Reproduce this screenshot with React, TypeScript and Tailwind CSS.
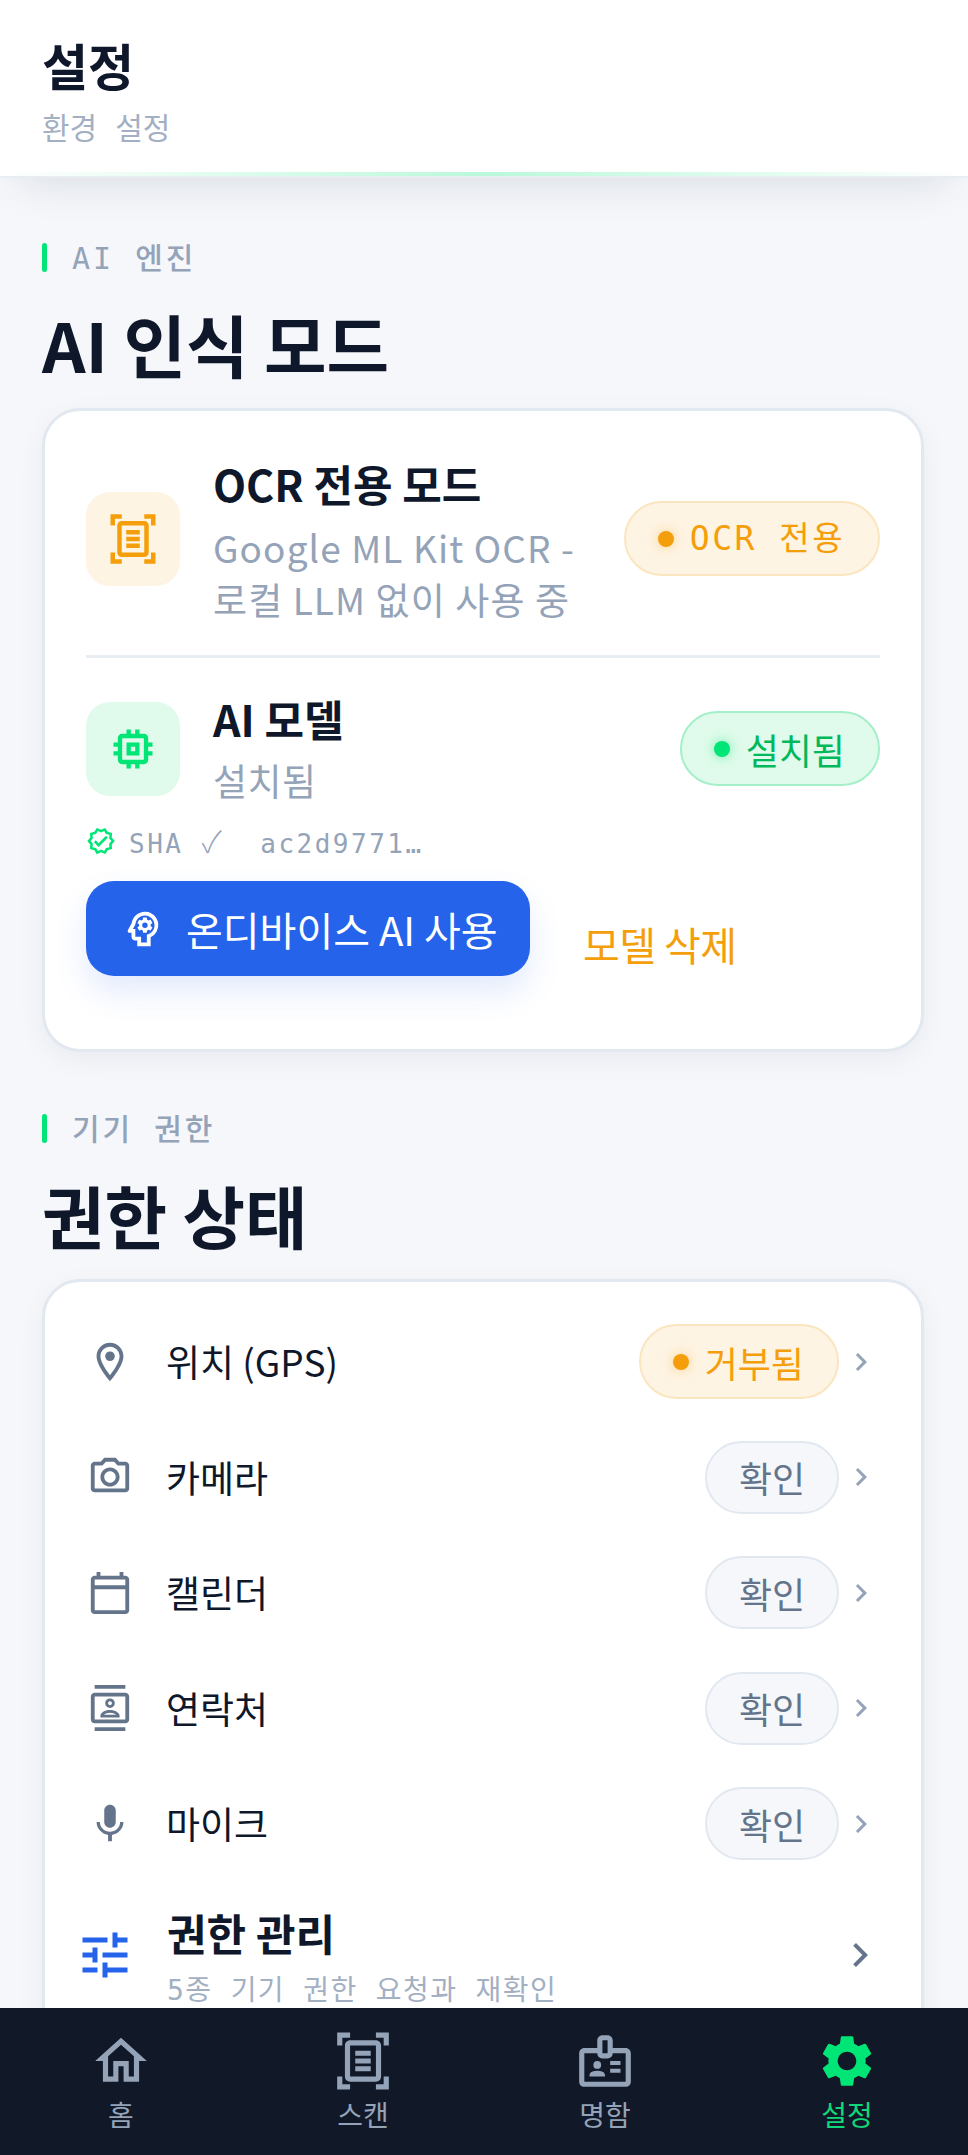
import type { ReactNode } from "react";
import {
  MdChevronRight,
  MdMic,
  MdOutlineBadge,
  MdOutlineCalendarToday,
  MdOutlineContacts,
  MdOutlineDocumentScanner,
  MdOutlineHome,
  MdOutlineLocationOn,
  MdOutlineMemory,
  MdOutlinePhotoCamera,
  MdOutlinePsychology,
  MdOutlineVerified,
  MdSettings,
  MdTune,
} from "react-icons/md";

const sans = "font-['Noto_Sans_CJK_KR','Noto_Sans',sans-serif]";
const mono = "font-['DejaVu_Sans_Mono','Noto_Sans_CJK_KR',monospace]";

function SectionHead({ label, title }: { label: string; title: string }) {
  return (
    <div>
      <div className="flex h-[30px] items-center gap-[25px]">
        <span className="-mt-[5px] h-[29px] w-[5px] rounded-full bg-[#00e676]" />
        <span className={`${mono} -mt-[2px] text-[30px] leading-none font-medium tracking-[3px] text-[#94a3b8]`}>{label}</span>
      </div>
      <h2 className="mt-[27px] text-[68px] leading-[84px] font-bold text-[#0f172a]">{title}</h2>
    </div>
  );
}

function Badge({ tone, children }: { tone: "amber" | "green"; children: ReactNode }) {
  const amber = tone === "amber";
  return (
    <span
      className={`flex h-[75px] shrink-0 items-center gap-[16px] rounded-full border-2 pr-[33px] pl-[32px] text-[36px] ${
        amber
          ? "border-[#fbe5bf] bg-[#fef4e3] text-[#f59e0b]"
          : "border-[#a5efc9] bg-[#e0fbeb] text-[#00b85c]"
      }`}
    >
      <span
        className={`h-[16px] w-[16px] rounded-full ${
          amber ? "bg-[#f59e0b] shadow-[0_0_12px_#f59e0b66]" : "bg-[#00e676] shadow-[0_0_12px_#00e67688]"
        }`}
      />
      {children}
    </span>
  );
}

function PermissionRow({ icon, label, denied }: { icon: ReactNode; label: string; denied?: boolean }) {
  return (
    <div className="flex h-[115.5px] items-center pr-[42px] pl-[42px]">
      <span className="flex w-[46px] justify-center text-[46px] text-[#64748b]">{icon}</span>
      <span className="ml-[33px] flex-1 text-[37px] text-[#0f172a]">{label}</span>
      {denied ? (
        <Badge tone="amber">거부됨</Badge>
      ) : (
        <span className="flex h-[73px] w-[134px] items-center justify-center rounded-full border-2 border-[#e2e8f0] bg-[#f5f7fb] text-[36px] text-[#64748b]">
          확인
        </span>
      )}
      <MdChevronRight className="ml-[4px] text-[36px] text-[#94a3b8]" />
    </div>
  );
}

function NavItem({ icon, label, active }: { icon: ReactNode; label: string; active?: boolean }) {
  return (
    <div className={`flex flex-col items-center ${active ? "text-[#00e676]" : "text-[#94a3b8]"}`}>
      <span className="flex h-[66px] items-center text-[62px]">{icon}</span>
      <span className={`mt-[2px] text-[28px] leading-[36px] ${active ? "text-[#10d878]" : ""}`}>{label}</span>
    </div>
  );
}

export default function App() {
  return (
    <div className={`${sans} flex h-[2155px] w-[968px] flex-col overflow-hidden bg-[#f5f7fb]`}>
      <div className="min-h-0 flex-1 overflow-hidden">
        <header className="relative h-[178px] border-b-2 border-[#e8edf3] bg-white pt-[30px] pl-[42px] shadow-[0_24px_40px_-20px_#0f172a1f]">
          <h1 className="text-[50px] leading-[68px] font-bold text-[#0f172a]">설정</h1>
          <p className={`${mono} mt-[13px] text-[30px] leading-[36px] text-[#a3afc2]`}>환경 설정</p>
          <span className="absolute inset-x-0 bottom-0 h-[4px] bg-gradient-to-r from-transparent via-[#00e67644] to-transparent" />
        </header>

        <main className="pt-[67px] pr-[44px] pl-[42px]">
          <SectionHead label="AI 엔진" title="AI 인식 모드" />
          <section className="mt-[22px] h-[644px] rounded-[38px] border-[3px] border-[#e2e8f0] bg-white px-[41px] pt-[42px] shadow-[0_8px_28px_#0f172a0d]">
            <div className="flex h-[171px] items-center">
              <span className="flex h-[94px] w-[94px] shrink-0 items-center justify-center rounded-[24px] bg-[#fef4e3] text-[54px] text-[#f59e0b]">
                <MdOutlineDocumentScanner />
              </span>
              <div className="ml-[33px] min-w-0 flex-1">
                <p className="text-[43px] leading-[60px] font-bold text-[#0f172a]">OCR 전용 모드</p>
                <p className="mt-[8px] w-[380px] text-[37px] leading-[52px] tracking-[1.1px] text-[#94a3b8]">
                  Google ML Kit OCR - 로컬 LLM 없이 사용 중
                </p>
              </div>
              <Badge tone="amber">
                <span className={`${mono} text-[33px] tracking-[2.5px]`}>OCR 전용</span>
              </Badge>
            </div>
            <div className="mt-[31px] h-[3px] bg-[#e8edf3]" />

            <div className="mt-[32px] flex h-[117px] items-center">
              <span className="flex h-[94px] w-[94px] shrink-0 items-center justify-center rounded-[24px] bg-[#e0fbeb] text-[52px] text-[#00e676]">
                <MdOutlineMemory />
              </span>
              <div className="ml-[33px] min-w-0 flex-1">
                <p className="text-[43px] leading-[58px] font-bold text-[#0f172a]">AI 모델</p>
                <p className="mt-[5px] text-[37px] leading-[56px] tracking-[0.5px] text-[#94a3b8]">설치됨</p>
              </div>
              <Badge tone="green">설치됨</Badge>
            </div>

            <div className="mt-[19px] flex h-[30px] items-center">
              <MdOutlineVerified className="text-[30px] text-[#00e676]" />
              <span className={`${mono} ml-[13px] text-[26px] tracking-[2.5px] whitespace-pre text-[#94a3b8]`}>
                SHA <span className="font-['Noto_Sans_CJK_KR'] text-[30px] font-light">✓</span>  ac2d9771…
              </span>
            </div>

            <div className="mt-[25px] flex items-start">
              <button className="flex h-[95px] w-[444px] items-center rounded-[28px] bg-[#2563eb] pl-[34px] text-[40px] text-white shadow-[0_16px_32px_#2563eb22]">
                <MdOutlinePsychology className="text-[46px]" />
                <span className="ml-[20px]">온디바이스 AI 사용</span>
              </button>
              <span className="mt-[35px] ml-[53px] text-[40px] leading-[56px] tracking-[-0.5px] text-[#f59e0b]">모델 삭제</span>
            </div>
          </section>

          <div className="mt-[64px]">
            <SectionHead label="기기 권한" title="권한 상태" />
          </div>
          <section className="mt-[22px] h-[800px] rounded-[38px] border-[3px] border-[#e2e8f0] bg-white pt-[22px] shadow-[0_8px_28px_#0f172a0d]">
            <PermissionRow icon={<MdOutlineLocationOn />} label="위치 (GPS)" denied />
            <PermissionRow icon={<MdOutlinePhotoCamera />} label="카메라" />
            <PermissionRow icon={<MdOutlineCalendarToday />} label="캘린더" />
            <PermissionRow icon={<MdOutlineContacts />} label="연락처" />
            <PermissionRow icon={<MdMic />} label="마이크" />
            <div className="mt-[20px] flex items-center pr-[37px] pl-[30px]">
              <MdTune className="text-[60px] text-[#2563eb]" />
              <div className="ml-[32px] flex-1">
                <p className="text-[43px] leading-[60px] font-bold text-[#0f172a]">권한 관리</p>
                <p className={`${mono} mt-[11px] text-[28px] leading-[36px] tracking-[1.4px] text-[#a3afc2]`}>5종 기기 권한 요청과 재확인</p>
              </div>
              <MdChevronRight className="text-[48px] text-[#64748b]" />
            </div>
          </section>
        </main>
      </div>

      <nav className="grid h-[147px] shrink-0 grid-cols-4 bg-[#111827] pt-[20px]">
        <NavItem icon={<MdOutlineHome />} label="홈" />
        <NavItem icon={<MdOutlineDocumentScanner />} label="스캔" />
        <NavItem icon={<MdOutlineBadge />} label="명함" />
        <NavItem icon={<MdSettings />} label="설정" active />
      </nav>
    </div>
  );
}
